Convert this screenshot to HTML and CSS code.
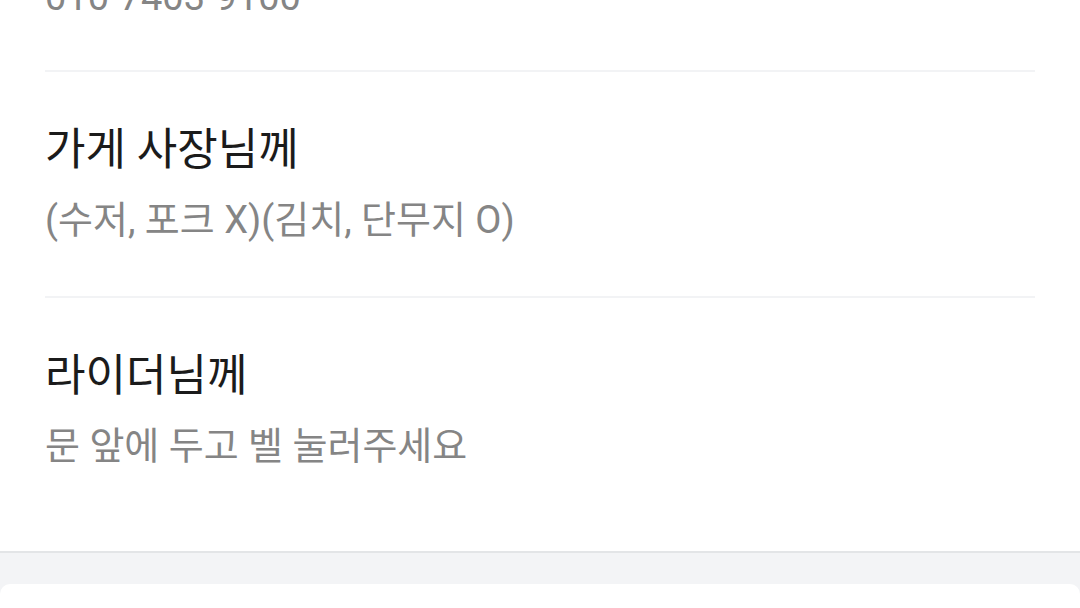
FILE: index.html
```html
<!DOCTYPE html>
<html lang="ko">
<head>
<meta charset="utf-8">
<link rel="stylesheet" href="styles.css">
</head>
<body>
<div class="page">
  <section class="requests">
    <div class="item item-phone">
      <div class="label">안심번호</div>
      <div class="value">010-7403-9100</div>
    </div>
    <div class="item">
      <div class="label">가게 사장님께</div>
      <div class="value">(수저, 포크 X)(김치, 단무지 O)</div>
    </div>
    <div class="item item-last">
      <div class="label">라이더님께</div>
      <div class="value">문 앞에 두고 벨 눌러주세요</div>
    </div>
  </section>
  <div class="gap"></div>
  <section class="card"></section>
</div>
</body>
</html>
```

FILE: styles.css
```css
html, body {
  margin: 0;
  padding: 0;
  background: #ffffff;
}
body {
  font-family: Roboto, "Noto Sans CJK KR", sans-serif;
  overflow: hidden;
  height: 608px;
}
.page {
  width: 1080px;
  background: #f3f4f6;
  height: 608px;
  overflow: hidden;
}
.requests {
  background: #ffffff;
  padding: 0 45px;
  margin-top: -151px;
  border-bottom: 2px solid #e3e5e7;
}
.item {
  padding: 50px 0;
  border-bottom: 2px solid #f2f3f5;
}
.item-phone {
  padding-bottom: 47px;
}
.item-last {
  border-bottom: none;
  padding-bottom: 79px;
}
.label {
  font-size: 44px;
  line-height: 56px;
  color: #1b1b1b;
}
.value {
  margin-top: 16px;
  font-size: 38px;
  line-height: 52px;
  color: #858585;
}
.gap {
  height: 31px;
}
.card {
  background: #ffffff;
  height: 200px;
  border-radius: 10px 10px 0 0;
}
```
